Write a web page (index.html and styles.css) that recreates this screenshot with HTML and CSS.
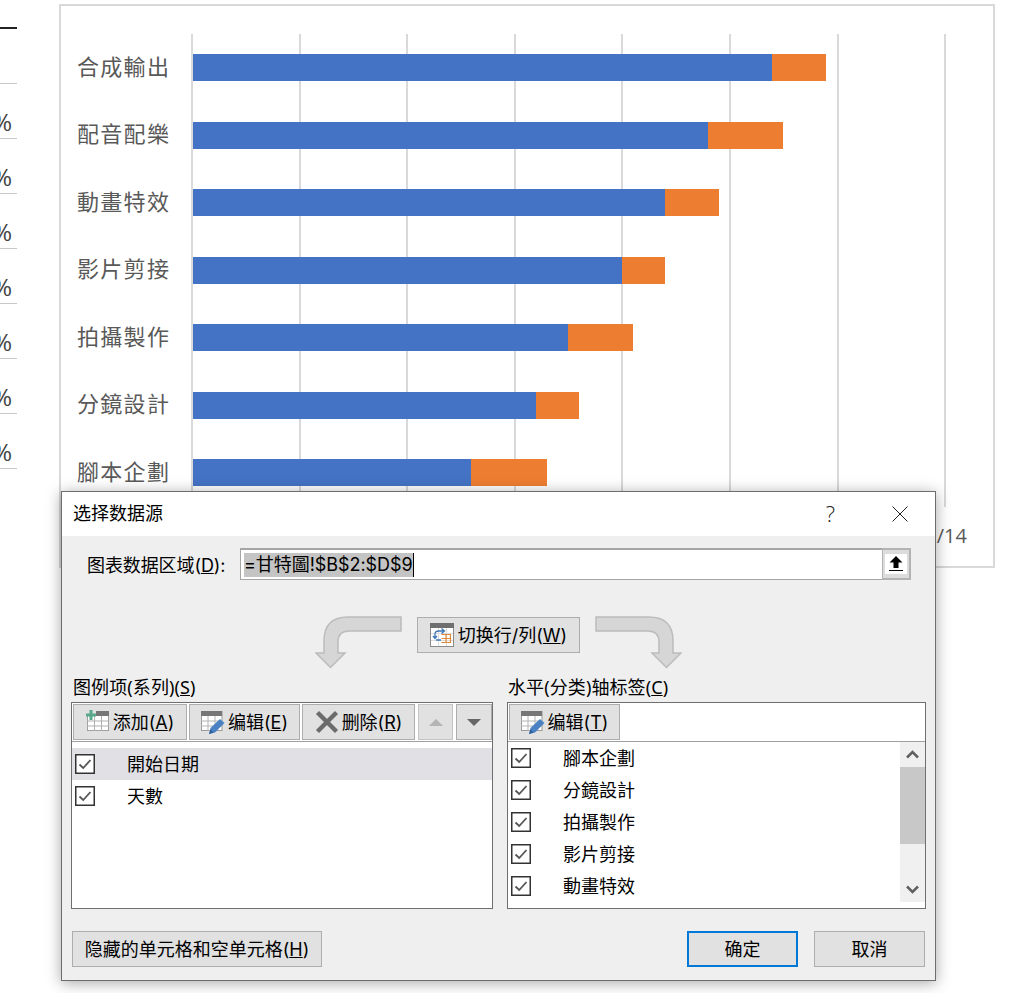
FILE: index.html
```html
<!DOCTYPE html>
<html lang="zh">
<head>
<meta charset="utf-8">
<title>选择数据源</title>
<link rel="stylesheet" href="styles.css">
</head>
<body>
<svg class="defs" width="0" height="0" aria-hidden="true">
  <defs>
    <symbol id="check" viewBox="0 0 20 20">
      <rect x="0.75" y="0.75" width="18.5" height="18.5" fill="#fff" stroke="#333" stroke-width="1.5"/>
      <path d="M4.5 10.5 L8.2 14 L15.5 6" fill="none" stroke="#555" stroke-width="1.8"/>
    </symbol>
    <symbol id="edit" viewBox="0 0 24 24">
      <rect x="0.5" y="1.500" width="20.500" height="19" fill="#fff" stroke="#9a9a9a"/>
      <rect x="0" y="1" width="21" height="5" fill="#767676"/>
      <path d="M0 11h21M0 16h21M7 6v15M14 6v15" stroke="#b5b5b5" fill="none"/>
      <path d="M8 24 L9.500 18 L19 9 L23.500 13 L14 22.500 Z" fill="#4a82c4"/>
      <path d="M8 24 L9.500 19.500 L12.500 22.500 Z" fill="#2f5f95"/>
    </symbol>
  </defs>
</svg>
<div class="page">
  <div class="sheet">
    <div class="sheet-rule"></div>
    <div class="sheet-cell"><span class="pct">%</span></div>
    <div class="sheet-cell"><span class="pct">%</span></div>
    <div class="sheet-cell"><span class="pct">%</span></div>
    <div class="sheet-cell"><span class="pct">%</span></div>
    <div class="sheet-cell"><span class="pct">%</span></div>
    <div class="sheet-cell"><span class="pct">%</span></div>
    <div class="sheet-cell"><span class="pct">%</span></div>
  </div>
  <div class="chart">
    <div class="chart-body">
      <div class="labels">
        <div class="label">合成輸出</div>
        <div class="label">配音配樂</div>
        <div class="label">動畫特效</div>
        <div class="label">影片剪接</div>
        <div class="label">拍攝製作</div>
        <div class="label">分鏡設計</div>
        <div class="label">腳本企劃</div>
      </div>
      <div class="plot">
        <div class="row"><i class="bar-a" style="width:579px"></i><i class="bar-b" style="width:54px"></i></div>
        <div class="row"><i class="bar-a" style="width:515px"></i><i class="bar-b" style="width:75px"></i></div>
        <div class="row"><i class="bar-a" style="width:472px"></i><i class="bar-b" style="width:54px"></i></div>
        <div class="row"><i class="bar-a" style="width:429px"></i><i class="bar-b" style="width:43px"></i></div>
        <div class="row"><i class="bar-a" style="width:375px"></i><i class="bar-b" style="width:65px"></i></div>
        <div class="row"><i class="bar-a" style="width:343px"></i><i class="bar-b" style="width:43px"></i></div>
        <div class="row"><i class="bar-a" style="width:278px"></i><i class="bar-b" style="width:76px"></i></div>
      </div>
    </div>
    <div class="axis">/14</div>
  </div>
</div>

<section class="dialog">
  <header class="titlebar">
    <span class="title">选择数据源</span>
    <span class="help">?</span>
    <svg class="close" width="16" height="16" viewBox="0 0 16 16"><path d="M0.5 0.5L15.5 15.5M15.5 0.5L0.5 15.5" stroke="#222" fill="none"/></svg>
  </header>
  <div class="body">
    <div class="range-row">
      <label class="range-label">图表数据区域(<u>D</u>):</label>
      <div class="range-input">
        <span class="selection">=甘特圖!$B$2:$D$9</span><span class="caret"></span>
      </div>
      <div class="collapse">
        <svg width="22" height="20" viewBox="0 0 22 20"><rect width="22" height="20" fill="#fff"/><path d="M11 2 L17.500 8.500 H13.500 V14 H8.500 V8.500 H4.500 Z" fill="#000"/><rect x="4" y="16" width="14" height="1" fill="#000"/></svg>
      </div>
    </div>

    <div class="switch-row">
      <svg class="curve" width="87" height="53" viewBox="0 0 87 53"><path d="M86 1 H33 Q9 1 9 25 V37 H1 L15.500 51.500 L30 37 H23 V26 Q23 15 34 15 H86 Z" fill="#d6d6d6" stroke="#bcbcbc" stroke-width="1.500"/></svg>
      <button class="btn switch">
        <svg width="24" height="24" viewBox="0 0 24 24"><rect x="0.5" y="0.5" width="23" height="23" fill="#fff" stroke="#8a8a8a"/><rect x="0" y="0" width="24" height="5" fill="#6f6f6f"/><path d="M1 10.500h22M1 17.500h22M8.500 5v18M16.500 5v18" stroke="#dcdcdc" fill="none"/><path d="M11.500 11.500h9v8h-9M16 11.500v8M11.500 15.500h9" stroke="#de8a3e" fill="none" stroke-width="1.200"/><path d="M5 15 V11 Q5 8 9 8 H14 M11.500 5.500 L14.500 8 L11.500 10.500 M3 13 L5 15.500 L7 13 M6 17 H11" stroke="#3f77b5" fill="none" stroke-width="1.300"/></svg>
        <span>切换行/列(<u>W</u>)</span>
      </button>
      <svg class="curve" width="87" height="53" viewBox="0 0 87 53"><path d="M1 1 H54 Q78 1 78 25 V37 H86 L71.500 51.500 L57 37 H64 V26 Q64 15 53 15 H1 Z" fill="#d6d6d6" stroke="#bcbcbc" stroke-width="1.500"/></svg>
    </div>

    <div class="panes">
      <div class="pane pane-left">
        <div class="pane-title">图例项(系列)(<u>S</u>)</div>
        <div class="box">
          <div class="toolbar">
            <button class="btn tool w114">
              <svg width="24" height="24" viewBox="0 0 24 24"><rect x="1.500" y="5.500" width="21" height="15" fill="#fff" stroke="#a0a0a0"/><rect x="10" y="1" width="13" height="5" fill="#767676"/><path d="M1 11h22M1 16h22M8.500 6v15M15.500 6v15" stroke="#b0b0b0" fill="none"/><path d="M3.500 0h3v3.500H10v3H6.500V10h-3V6.500H0v-3h3.500Z" fill="#5aa88a"/></svg>
              <span>添加(<u>A</u>)</span>
            </button>
            <button class="btn tool w111">
              <svg width="24" height="24"><use href="#edit"/></svg>
              <span>编辑(<u>E</u>)</span>
            </button>
            <button class="btn tool w113">
              <svg width="24" height="24" viewBox="0 0 24 24"><path d="M2.500 2.500L21.500 21.500M21.500 2.500L2.500 21.500" stroke="#6b6b6b" stroke-width="4.500" fill="none"/></svg>
              <span>删除(<u>R</u>)</span>
            </button>
            <button class="btn tool w34 up"><i class="tri-up"></i></button>
            <button class="btn tool w36"><i class="tri-down"></i></button>
          </div>
          <ul class="list list-left">
            <li class="item selected"><svg class="cb" width="20" height="20"><use href="#check"/></svg><span class="item-text">開始日期</span></li>
            <li class="item"><svg class="cb" width="20" height="20"><use href="#check"/></svg><span class="item-text">天數</span></li>
          </ul>
        </div>
      </div>
      <div class="pane pane-right">
        <div class="pane-title">水平(分类)轴标签(<u>C</u>)</div>
        <div class="box">
          <div class="toolbar">
            <button class="btn tool w111">
              <svg width="24" height="24"><use href="#edit"/></svg>
              <span>编辑(<u>T</u>)</span>
            </button>
          </div>
          <div class="list-wrap">
            <ul class="list list-right">
              <li class="item"><svg class="cb" width="20" height="20"><use href="#check"/></svg><span class="item-text">腳本企劃</span></li>
              <li class="item"><svg class="cb" width="20" height="20"><use href="#check"/></svg><span class="item-text">分鏡設計</span></li>
              <li class="item"><svg class="cb" width="20" height="20"><use href="#check"/></svg><span class="item-text">拍攝製作</span></li>
              <li class="item"><svg class="cb" width="20" height="20"><use href="#check"/></svg><span class="item-text">影片剪接</span></li>
              <li class="item"><svg class="cb" width="20" height="20"><use href="#check"/></svg><span class="item-text">動畫特效</span></li>
            </ul>
            <div class="scrollbar">
              <svg class="chev" width="25" height="25" viewBox="0 0 25 25"><path d="M7 15.500L12.500 10L18 15.500" stroke="#606060" stroke-width="2.500" fill="none"/></svg>
              <div class="thumb"></div>
              <svg class="chev chev-down" width="25" height="25" viewBox="0 0 25 25"><path d="M7 9.500L12.500 15L18 9.500" stroke="#606060" stroke-width="2.500" fill="none"/></svg>
            </div>
          </div>
        </div>
      </div>
    </div>

    <div class="actions">
      <button class="btn action hidden-cells">隐藏的单元格和空单元格(<u>H</u>)</button>
      <div class="action-right">
        <button class="btn action primary">确定</button>
        <button class="btn action cancel">取消</button>
      </div>
    </div>
  </div>
</section>
</body>
</html>
```

FILE: styles.css
```css
* { box-sizing: border-box; }
html, body { margin: 0; padding: 0; }
body {
  width: 1026px;
  height: 993px;
  overflow: hidden;
  background: #fff;
  position: relative;
  font-family: "Inter", "Noto Sans CJK SC", sans-serif;
}
.defs { position: absolute; }
.page { display: flex; align-items: flex-start; }

.sheet { width: 17px; margin-top: 27px; margin-right: 42px; flex: none; overflow: hidden; }
.sheet-rule { height: 2px; background: #222; margin-bottom: 55px; position: relative; }
.sheet-rule::after { content: ""; display: block; position: absolute; left: 0; right: 0; top: 56px; height: 1px; background: #c8c8c8; }
.sheet-cell {
  height: 55px;
  border-bottom: 1px solid #c8c8c8;
  display: flex;
  justify-content: flex-end;
  align-items: flex-end;
  padding: 0 5px 1px 0;
}
.pct { font: 24px/30px "Open Sans", sans-serif; color: #444; flex: none; }

.chart {
  width: 936px;
  height: 564px;
  margin-top: 4px;
  border: 2px solid #d9d9d9;
  background: #fff;
  display: flex;
  flex-direction: column;
  flex: none;
}
.chart-body { display: flex; margin-top: 28px; }
.labels { width: 130px; padding-left: 16px; flex: none; }
.label {
  height: 67.5px;
  padding-bottom: 6px;
  display: flex;
  align-items: center;
  font: 22px/30px "Noto Sans CJK TC", sans-serif;
  letter-spacing: 1.3px;
  color: #595959;
  white-space: nowrap;
}
.plot {
  width: 756px;
  height: 472.5px;
  background: repeating-linear-gradient(to right, #d9d9d9 0, #d9d9d9 2px, transparent 2px, transparent 107.6px);
}
.row { height: 67.5px; display: flex; align-items: center; padding-left: 2px; }
.row i { display: block; height: 27px; }
.bar-a { background: #4472c4; }
.bar-b { background: #ed7d31; }
.axis {
  align-self: flex-end;
  margin-top: 14px;
  margin-right: 26px;
  font: 20px/30px "Open Sans", sans-serif;
  color: #595959;
}

.dialog {
  position: absolute;
  left: 61px;
  top: 491px;
  width: 875px;
  height: 490px;
  border: 1px solid #6d6d6d;
  background: #efefef;
  box-shadow: 0 2px 14px rgba(0,0,0,.35);
  display: flex;
  flex-direction: column;
  color: #000;
  font-size: 18px;
  line-height: 24px;
}
button { font: inherit; color: inherit; }
.titlebar {
  height: 44px;
  background: #fff;
  display: flex;
  align-items: center;
  padding: 0 0 0 11px;
  flex: none;
}
.title { flex: 1; }
.help { font: 300 22px/24px "Open Sans", sans-serif; margin-right: 57px; padding-bottom: 2px; color: #222; }
.close { margin-right: 27px; }
.body { flex: 1; display: flex; flex-direction: column; }

.range-row { display: flex; align-items: center; margin-top: 12px; height: 32px; padding-left: 25px; }
.range-label { width: 153px; flex: none; padding-top: 4px; letter-spacing: -.1px; }
.range-input {
  width: 642px;
  height: 32px;
  background: #fff;
  border: 1px solid #a5a5a5;
  border-width: 2px 0 1px 1px;
  padding-left: 3px;
  display: flex;
  align-items: center;
}
.selection { background: #c4c4c4; line-height: 24px; white-space: nowrap; letter-spacing: -.05px; }
.caret { width: 1px; height: 24px; background: #000; }
.collapse {
  width: 29px;
  height: 32px;
  border: 2px solid #b3b3b3;
  border-left-width: 1px;
  background: #dcdcdc;
  display: flex;
  align-items: center;
  justify-content: center;
}

.btn {
  background: #e1e1e1;
  border: 1px solid #adadad;
  padding: 2px 0 0;
  margin: 0;
  display: flex;
  align-items: center;
  justify-content: center;
  white-space: nowrap;
}
.btn svg { margin-top: -2px; }
.switch-row { display: flex; align-items: flex-start; margin-top: 36px; padding-left: 253px; height: 52px; }
.switch { width: 163px; height: 36px; margin: 1px 15px 0 15px; gap: 4px; }

.panes { display: flex; margin-top: 7px; padding-left: 9px; }
.pane-left { width: 436px; flex: none; }
.pane-right { width: 420px; flex: none; }
.pane-title { padding-left: 2px; height: 24px; margin-bottom: 3px; font-family: "Noto Sans", "Noto Sans CJK SC", sans-serif; letter-spacing: .1px; }
.pane-right .pane-title { padding-left: 1px; }
.pane .box { height: 207px; border: 1px solid #6f6f6f; background: #fff; }
.pane-left .box { width: 422px; }
.pane-right .box { width: 419px; }
.toolbar { display: flex; gap: 2px; height: 39px; padding: 1px; border-bottom: 1px solid #a0a0a0; }
.tool { height: 36px; gap: 3px; flex: none; }
.w114 { width: 114px; }
.w111 { width: 111px; }
.w113 { width: 113px; margin-right: 1px; }
.w34 { width: 35px; margin-right: 1px; }
.w36 { width: 36px; }
.up { border-color: #c4c4c4; }
.tri-up { width: 0; height: 0; margin-top: -2px; border: 7px solid transparent; border-top: 0; border-bottom: 7px solid #b4b4b4; }
.tri-down { width: 0; height: 0; margin-top: -2px; border: 7px solid transparent; border-bottom: 0; border-top: 7px solid #666; }

.list { list-style: none; margin: 0; padding: 0; }
.list-left { padding-top: 6px; }
.item { height: 32px; display: flex; align-items: center; }
.item.selected { background: #e1e0e5; }
.item-text { padding-top: 2px; }
.list-left .cb { margin-left: 3px; margin-right: 32px; }
.list-right .cb { margin-left: 3px; margin-right: 32px; }
.list-wrap { display: flex; }
.list-right { width: 392px; }
.scrollbar { width: 25px; height: 160px; background: #f0f0f0; display: flex; flex-direction: column; }
.thumb { height: 77px; background: #c8c8c8; flex: none; }
.chev { display: block; flex: none; }
.chev-down { margin-top: auto; }

.actions { display: flex; justify-content: space-between; margin-top: 22px; padding: 0 10px; }
.action { height: 36px; }
.hidden-cells { width: 250px; }
.action-right { display: flex; gap: 16px; }
.primary { width: 111px; border: 2px solid #0078d7; }
.cancel { width: 111px; }
```
